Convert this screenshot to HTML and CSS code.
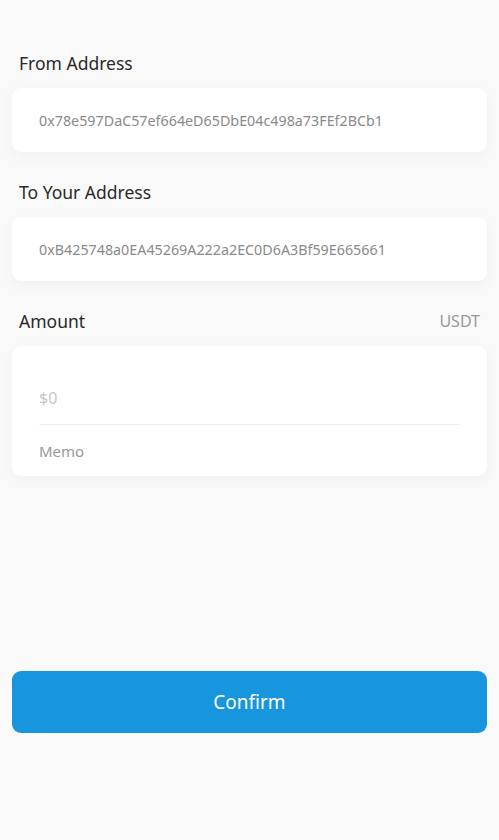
FILE: index.html
```html
<!DOCTYPE html>
<html lang="en">
<head>
    <meta charset="UTF-8">
    <meta name="viewport" content="width=device-width, initial-scale=1.0">
    <title>Transfer</title>
    <link rel="stylesheet" href="styles.css">
</head>
<body>
    <section class="page">
        <div class="field-label">From Address</div>
        <div class="card">
            <div class="address">0x78e597DaC57ef664eD65DbE04c498a73FEf2BCb1</div>
        </div>

        <div class="field-label">To Your Address</div>
        <div class="card">
            <div class="address">0xB425748a0EA45269A222a2EC0D6A3Bf59E665661</div>
        </div>

        <div class="field-label">
            <span>Amount</span>
            <span class="unit">USDT</span>
        </div>
        <div class="card amount-card">
            <div class="amount-row">$0</div>
            <div class="memo-row">Memo</div>
        </div>

        <button class="confirm-btn" type="button">Confirm</button>
    </section>
</body>
</html>
```

FILE: styles.css
```css
body {
    margin: 0;
    background-color: #f8f9f8;
    font-family: "Noto Sans", "Open Sans", sans-serif;
    color: #222;
}
.page {
    padding: 50px 12px 0;
    display: flex;
    flex-direction: column;
}
.field-label {
    display: flex;
    justify-content: space-between;
    align-items: center;
    height: 26px;
    padding: 0 7px;
    margin-bottom: 12px;
    font-size: 17.5px;
    color: #2a2a2a;
}
.field-label .unit {
    font-size: 16px;
    color: #999;
}
.card {
    background: #fff;
    border-radius: 9px;
    box-shadow: 0 4px 14px rgba(0, 0, 0, 0.035);
    margin-bottom: 27px;
}
.address {
    height: 64px;
    display: flex;
    align-items: center;
    padding: 0 27px;
    font-size: 14.3px;
    color: #8a8a8a;
}
.amount-card {
    padding: 26px 27px 0;
}
.amount-row {
    height: 52px;
    display: flex;
    align-items: center;
    border-bottom: 1px solid #efefef;
    font-size: 16px;
    color: #c8c8c8;
}
.memo-row {
    height: 51px;
    display: flex;
    align-items: center;
    font-size: 15px;
    color: #999;
}
.confirm-btn {
    margin-top: 168px;
    height: 62px;
    border: none;
    border-radius: 9px;
    background-color: #1796de;
    color: #fff;
    font-family: inherit;
    font-size: 19px;
    cursor: pointer;
}
```
